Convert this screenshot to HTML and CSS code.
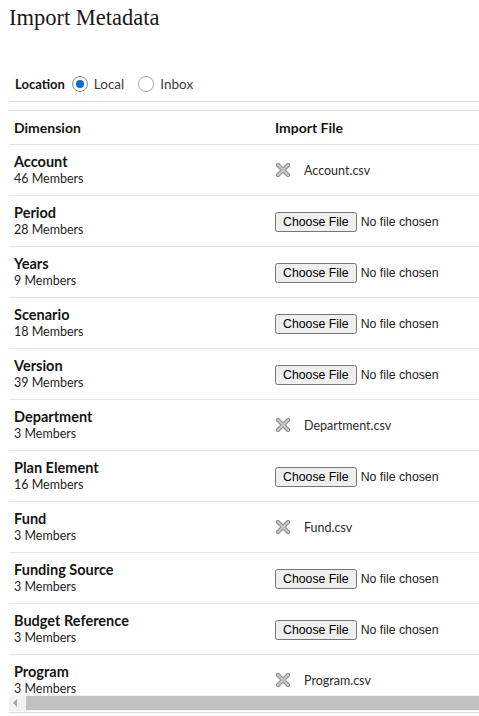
FILE: index.html
```html
<!DOCTYPE html>
<html>
<head>
<meta charset="utf-8">
<link rel="stylesheet" href="styles.css">
</head>
<body>
<div class="page">
  <h1 class="title">Import Metadata</h1>
  <div class="location">
    <span class="loc-label">Location</span>
    <label class="radio"><span class="dot checked"></span>Local</label>
    <label class="radio"><span class="dot"></span>Inbox</label>
  </div>
  <div class="sep"></div>
  <div class="grid-wrap">
    <div class="scroller">
      <table class="grid">
        <thead>
          <tr><th class="c1">Dimension</th><th class="c2">Import File</th></tr>
        </thead>
        <tbody>
          <tr><td class="c1"><div class="name">Account</div><div class="mem">46 Members</div></td><td class="c2"><div class="file"><svg class="x" viewBox="0 0 14 14"><path d="M2 2 L12 12 M12 2 L2 12" stroke="#8f8f8f" stroke-width="4.2" stroke-linecap="round"/><path d="M2 2 L12 12 M12 2 L2 12" stroke="#c8c8c8" stroke-width="2" stroke-linecap="round"/></svg><span>Account.csv</span></div></td></tr>
          <tr><td class="c1"><div class="name">Period</div><div class="mem">28 Members</div></td><td class="c2"><input type="file" class="fi"></td></tr>
          <tr><td class="c1"><div class="name">Years</div><div class="mem">9 Members</div></td><td class="c2"><input type="file" class="fi"></td></tr>
          <tr><td class="c1"><div class="name">Scenario</div><div class="mem">18 Members</div></td><td class="c2"><input type="file" class="fi"></td></tr>
          <tr><td class="c1"><div class="name">Version</div><div class="mem">39 Members</div></td><td class="c2"><input type="file" class="fi"></td></tr>
          <tr><td class="c1"><div class="name">Department</div><div class="mem">3 Members</div></td><td class="c2"><div class="file"><svg class="x" viewBox="0 0 14 14"><path d="M2 2 L12 12 M12 2 L2 12" stroke="#8f8f8f" stroke-width="4.2" stroke-linecap="round"/><path d="M2 2 L12 12 M12 2 L2 12" stroke="#c8c8c8" stroke-width="2" stroke-linecap="round"/></svg><span>Department.csv</span></div></td></tr>
          <tr><td class="c1"><div class="name">Plan Element</div><div class="mem">16 Members</div></td><td class="c2"><input type="file" class="fi"></td></tr>
          <tr><td class="c1"><div class="name">Fund</div><div class="mem">3 Members</div></td><td class="c2"><div class="file"><svg class="x" viewBox="0 0 14 14"><path d="M2 2 L12 12 M12 2 L2 12" stroke="#8f8f8f" stroke-width="4.2" stroke-linecap="round"/><path d="M2 2 L12 12 M12 2 L2 12" stroke="#c8c8c8" stroke-width="2" stroke-linecap="round"/></svg><span>Fund.csv</span></div></td></tr>
          <tr><td class="c1"><div class="name">Funding Source</div><div class="mem">3 Members</div></td><td class="c2"><input type="file" class="fi"></td></tr>
          <tr><td class="c1"><div class="name">Budget Reference</div><div class="mem">3 Members</div></td><td class="c2"><input type="file" class="fi"></td></tr>
          <tr><td class="c1"><div class="name">Program</div><div class="mem">3 Members</div></td><td class="c2"><div class="file"><svg class="x" viewBox="0 0 14 14"><path d="M2 2 L12 12 M12 2 L2 12" stroke="#8f8f8f" stroke-width="4.2" stroke-linecap="round"/><path d="M2 2 L12 12 M12 2 L2 12" stroke="#c8c8c8" stroke-width="2" stroke-linecap="round"/></svg><span>Program.csv</span></div></td></tr>
        </tbody>
      </table>
    </div>
    <div class="hscroll">
      <div class="arrow"></div>
      <div class="thumb"></div>
    </div>
    <div class="bottom-line"></div>
  </div>
</div>
</body>
</html>
```

FILE: styles.css
```css
html, body {
  margin: 0;
  padding: 0;
  background: #ffffff;
}
body {
  font-family: Lato, "Noto Sans", sans-serif;
  color: #161513;
  overflow: hidden;
}
.page {
  padding-left: 9px;
  width: 470px;
  overflow: hidden;
}
.title {
  font-family: "Liberation Serif", serif;
  font-weight: normal;
  font-size: 22.5px;
  line-height: 26px;
  margin: 5px 0 0 0;
  color: #1a1816;
}
.location {
  display: flex;
  align-items: center;
  height: 20px;
  margin-top: 43px;
  padding-left: 6px;
  font-size: 13.5px;
}
.loc-label {
  font-weight: bold;
  font-size: 13px;
  margin-right: 7px;
}
.radio {
  display: flex;
  align-items: center;
  margin-right: 14px;
  color: #3b3a38;
}
.dot {
  width: 16px;
  height: 16px;
  border: 1px solid #a8a8a8;
  border-radius: 50%;
  box-sizing: border-box;
  margin-right: 6px;
  position: relative;
  background: #fff;
}
.dot.checked {
  border-color: #7f8fa0;
}
.dot.checked::after {
  content: "";
  position: absolute;
  left: 3px;
  top: 3px;
  width: 8px;
  height: 8px;
  border-radius: 50%;
  background: #0a6fd1;
}
.sep {
  height: 1px;
  background: #d6dee6;
  margin-top: 7px;
}
.grid-wrap {
  margin-top: 8px;
}
.scroller {
  height: 584px;
  overflow: hidden;
  border-top: 1px solid #e3e3e3;
}
.grid {
  border-collapse: collapse;
  width: 600px;
}
.grid th {
  text-align: left;
  font-size: 14px;
  font-weight: bold;
  height: 33px;
  padding: 0;
  border-bottom: 1px solid #dfe3e8;
  vertical-align: middle;
}
.grid td {
  height: 50px;
  padding: 0;
  border-bottom: 1px solid #e8e8e8;
  vertical-align: middle;
}
.c1 {
  width: 261px;
  padding-left: 5px !important;
}
.name {
  font-weight: bold;
  font-size: 14.5px;
  line-height: 18px;
  margin-top: 0;
}
.mem {
  font-size: 12.5px;
  line-height: 16px;
  color: #1f1e1c;
}
.file {
  display: flex;
  align-items: center;
  font-size: 12.5px;
  color: #2c2b29;
  padding-top: 0;
}
.x {
  width: 14px;
  height: 14px;
  margin-left: 1px;
  margin-right: 14px;
}
.fi {
  font-family: "Liberation Sans", Arial, sans-serif;
  font-size: 12.3px;
  color: #222;
}
.hscroll {
  display: flex;
  height: 16px;
  background: #f1f1f1;
  align-items: center;
}
.arrow {
  width: 0;
  height: 0;
  border-top: 4px solid transparent;
  border-bottom: 4px solid transparent;
  border-right: 4px solid #a3a3a3;
  margin-left: 4px;
  margin-right: 9px;
}
.thumb {
  flex: 1;
  height: 14px;
  background: #c1c1c1;
}
.bottom-line {
  height: 1px;
  background: #d6dee6;
  margin-top: 1px;
}
```
